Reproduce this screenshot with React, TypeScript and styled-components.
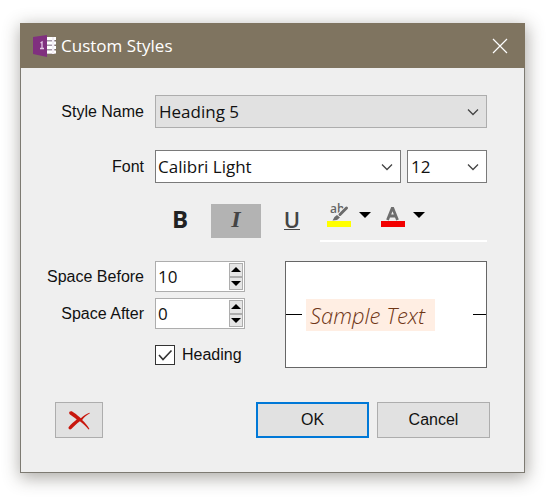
import React, { useState } from "react";
import styled, { createGlobalStyle, css } from "styled-components";

const uiFont = `"Liberation Sans", Arial, sans-serif`;
const fieldFont = `"Open Sans", "Noto Sans", sans-serif`;

const GlobalStyle = createGlobalStyle`
  *, *::before, *::after { box-sizing: border-box; }
  body { margin: 0; background: #fff; color: #111; font: 16px/20px ${uiFont}; }
  button, input, select { margin: 0; font: inherit; color: inherit; border-radius: 0; }
`;

const Page = styled.main`
  padding: 23px 35px 27px 20px;
`;

const Dialog = styled.section`
  border: 1px solid #7d7a72;
  border-top: 0;
  background: #efefef;
  box-shadow: 1px 4px 16px 1px rgba(60, 55, 45, 0.42);
`;

const TitleBar = styled.header`
  display: flex;
  align-items: center;
  height: 45px;
  margin: 0 -1px;
  padding: 0 17px 0 13px;
  background: #7f7460;
  color: #fff;
`;

const Title = styled.h1`
  flex: 1;
  margin: 0 0 0 5px;
  font: 400 17px/24px ${fieldFont};
`;

const CloseButton = styled.button`
  display: flex;
  padding: 0;
  border: 0;
  background: none;
`;

const Form = styled.form`
  padding: 27px 37px 34px 24px;
`;

const Row = styled.div<{ $gap: number }>`
  display: grid;
  grid-template-columns: 99px minmax(0, 1fr);
  column-gap: 11px;
  align-items: center;
  margin-bottom: ${(p) => p.$gap}px;
`;

const Label = styled.label`
  text-align: right;
  white-space: nowrap;
`;

const FontFields = styled.div`
  display: grid;
  grid-template-columns: minmax(0, 1fr) 80px;
  gap: 6px;
`;

const SelectBox = styled.div<{ $filled?: boolean }>`
  display: grid;
  align-items: center;
  height: 33px;
  border: 1px solid ${(p) => (p.$filled ? "#adadad" : "#7a7a7a")};
  background: ${(p) => (p.$filled ? "#e1e1e1" : "#fff")};

  select, svg { grid-area: 1 / 1; }
  svg { justify-self: end; margin-right: 7px; pointer-events: none; }
`;

const Select = styled.select<{ $indent: number }>`
  width: 100%;
  height: 31px;
  padding: 0 24px 0 ${(p) => p.$indent}px;
  appearance: none;
  border: 0;
  background: none;
  font: 17px/24px ${fieldFont};
`;

const Toolbar = styled.div`
  display: flex;
  gap: 6px;
  margin: 0 0 19px 110px;
`;

const StyleButton = styled.button<{ $on: boolean }>`
  display: flex;
  align-items: center;
  justify-content: center;
  width: 50px;
  height: 34px;
  margin-top: 4px;
  padding: 0 0 4px;
  border: 0;
  background: ${(p) => (p.$on ? "#b3b3b3" : "transparent")};
  color: #222;
`;

const glyph = css`
  font-size: 24px;
  line-height: 24px;
`;

const Bold = styled.b`
  ${glyph}
  font-family: ${fieldFont};
`;

const Italic = styled.i`
  ${glyph}
  font-family: "Liberation Serif", serif;
  font-weight: 700;
  color: #444;
`;

const Underline = styled.span`
  font: 600 22px/20px ${fieldFont};
  border-bottom: 1px solid #444;
  color: #444;
`;

const ColorStrip = styled.div`
  display: flex;
  flex: 1;
  gap: 4px;
  height: 42px;
  margin-left: -3px;
  padding: 3px 0 0 7px;
  border-bottom: 2px solid #fff;
`;

const ColorButton = styled.button`
  display: flex;
  align-items: center;
  gap: 8px;
  width: 50px;
  height: 24px;
  padding: 0;
  border: 0;
  background: none;
  svg { flex: none; }
`;

const Lower = styled.div`
  display: flex;
  gap: 40px;
`;

const Spacing = styled.div`
  display: grid;
  grid-template-columns: 99px 90px;
  column-gap: 11px;
  row-gap: 6px;
  align-items: center;
  align-content: start;
`;

const Spinner = styled.div`
  display: flex;
  height: 31px;
  padding: 1px;
  border: 1px solid #adadad;
  background: #fff;
`;

const NumberInput = styled.input`
  flex: 1;
  min-width: 0;
  padding: 0 1px;
  appearance: textfield;
  border: 0;
  outline: 0;
  background: none;
  font: 17px/24px ${fieldFont};
  &::-webkit-inner-spin-button { appearance: none; margin: 0; }
`;

const Arrows = styled.div`
  display: grid;
  grid-template-rows: 1fr 1fr;
  width: 14px;
`;

const Arrow = styled.button`
  display: flex;
  align-items: center;
  justify-content: center;
  min-height: 0;
  padding: 0;
  border: 1px solid #adadad;
  background: #e6e6e6;
`;

const CheckLabel = styled.label`
  grid-column: 2;
  display: flex;
  align-items: center;
  gap: 7px;
  margin-top: 10px;
`;

const CheckBox = styled.span`
  display: grid;
  flex: none;
  width: 20px;
  height: 20px;
  input, svg { grid-area: 1 / 1; }
  svg { pointer-events: none; visibility: hidden; }
  input:checked + svg { visibility: visible; }
  input {
    width: 20px;
    height: 20px;
    appearance: none;
    border: 1px solid #333;
    background: #fff;
  }
`;

const Preview = styled.div`
  display: flex;
  flex: 1;
  align-items: center;
  height: 107px;
  border: 1px solid #666;
  background: #fff;
`;

const Rule = styled.span<{ $end?: boolean }>`
  width: ${(p) => (p.$end ? 13 : 16)}px;
  height: 1px;
  margin-left: ${(p) => (p.$end ? "auto" : 0)};
  background: #000;
`;

const Sample = styled.span`
  margin-left: 4px;
  padding: 0 10px 0 4px;
  background: #ffeee3;
  color: #6f3616;
  font: italic 300 22px/32px ${fieldFont};
  white-space: nowrap;
`;

const Footer = styled.footer`
  display: flex;
  gap: 8px;
  margin: 34px -3px 0 10px;
`;

const Button = styled.button<{ $primary?: boolean; $icon?: boolean }>`
  display: flex;
  align-items: center;
  justify-content: center;
  width: ${(p) => (p.$icon ? 48 : 113)}px;
  height: 36px;
  padding: 0;
  margin-right: ${(p) => (p.$icon ? "auto" : 0)};
  border: ${(p) => (p.$primary ? "2px solid #0078d7" : "1px solid #adadad")};
  background: #e1e1e1;
`;

const NotebookIcon = () => (
  <svg width="23" height="24" viewBox="0 0 23 24" aria-hidden="true">
    <path d="M13 3h9v17h-9z" fill="#a698a8" />
    <path d="M13 4.500h10M13 9h10M13 13.500h10M13 18h10" stroke="#fff" strokeWidth="3" />
    <path d="M20 3v17" stroke="#f4eef5" strokeWidth="2" />
    <path d="M0 3 14 1v22L0 20z" fill="#80307f" />
    <path d="M7.500 9 9 8V14.500M7 14.500h4" fill="none" stroke="#e3c6e6" strokeWidth="1.300" />
  </svg>
);

const Chevron = () => (
  <svg width="12" height="8" viewBox="0 0 12 8" aria-hidden="true">
    <path d="M1 1.500 6 6.500 11 1.500" fill="none" stroke="#444" strokeWidth="1.300" />
  </svg>
);

const DropArrow = () => (
  <svg width="12" height="6" viewBox="0 0 12 6" aria-hidden="true">
    <path d="M0 0h12L6 6z" fill="#000" />
  </svg>
);

const ArrowGlyph = ({ up }: { up?: boolean }) => (
  <svg width="10" height="5" viewBox="0 0 10 5" aria-hidden="true">
    <path d={up ? "M0 5h10L5 0z" : "M0 0h10L5 5z"} fill="#000" />
  </svg>
);

const HighlightIcon = () => (
  <svg width="24" height="24" viewBox="0 0 24 24" overflow="visible" aria-hidden="true">
    <text x="3" y="10" fontFamily="Open Sans, sans-serif" fontWeight="600" fontSize="12" fill="#666">ab</text>
    <path d="M19.500 5 13 11.500" stroke="#efefef" strokeWidth="5" />
    <path d="M19.500 5 13 11.500" stroke="#6b6b6b" strokeWidth="3" strokeLinecap="round" />
    <path d="m10 12 3 2.500-3 2.500-4.500.500 2-3.500z" fill="#6b6b6b" />
    <path d="M0 18h24v6H0z" fill="#ff0" />
  </svg>
);

const FontColorIcon = () => (
  <svg width="24" height="24" viewBox="0 0 24 24" aria-hidden="true">
    <path d="M6.500 17 11.500 4.500 16.500 17M8 13h7" fill="none" stroke="#6e6e6e" strokeWidth="2.800" strokeLinejoin="bevel" />
    <path d="M0 18h24v6H0z" fill="#f20000" />
  </svg>
);

const DeleteIcon = () => (
  <svg width="22" height="20" viewBox="0 0 24 22" aria-hidden="true">
    <path d="M1.500 2C3 .500 5 1.500 6.500 3c3 2 5 4 7.500 6 3-2.500 6-5 9.500-6l.500.500C20.500 5.500 17.500 8 15.500 11c3 3 6 6 8 10l-1 .500C20 18 16 15 13 12.500 9.500 15 6.500 18 3.500 21c-1.500 1-3.500 0-3-2 2.500-3.500 6-6 9-8.500C7 8 4 6.500 2 5 1 4 1 3 1.500 2z" fill="#c8170d" />
  </svg>
);

type SpinProps = { id: string; label: string; value: number; onChange: (n: number) => void };

const SpinField = ({ id, label, value, onChange }: SpinProps) => (
  <>
    <Label htmlFor={id}>{label}</Label>
    <Spinner>
      <NumberInput id={id} type="number" value={value} onChange={(e) => onChange(Number(e.target.value))} />
      <Arrows>
        <Arrow type="button" aria-label={`Increase ${label}`} onClick={() => onChange(value + 1)}>
          <ArrowGlyph up />
        </Arrow>
        <Arrow type="button" aria-label={`Decrease ${label}`} onClick={() => onChange(value - 1)}>
          <ArrowGlyph />
        </Arrow>
      </Arrows>
    </Spinner>
  </>
);

export default function App() {
  const [bold, setBold] = useState(false);
  const [italic, setItalic] = useState(true);
  const [underline, setUnderline] = useState(false);
  const [before, setBefore] = useState(10);
  const [after, setAfter] = useState(0);

  return (
    <Page>
      <GlobalStyle />
      <Dialog role="dialog" aria-labelledby="title">
        <TitleBar>
          <NotebookIcon />
          <Title id="title">Custom Styles</Title>
          <CloseButton type="button" aria-label="Close">
            <svg width="16" height="16" viewBox="0 0 16 16" aria-hidden="true">
              <path d="m1 1 14 14M15 1 1 15" stroke="#fff" strokeWidth="1.200" />
            </svg>
          </CloseButton>
        </TitleBar>
        <Form onSubmit={(e) => e.preventDefault()}>
          <Row $gap={22}>
            <Label htmlFor="style">Style Name</Label>
            <SelectBox $filled>
              <Select id="style" $indent={3}>
                <option>Heading 5</option>
              </Select>
              <Chevron />
            </SelectBox>
          </Row>
          <Row $gap={17}>
            <Label htmlFor="font">Font</Label>
            <FontFields>
              <SelectBox>
                <Select id="font" $indent={2}>
                  <option>Calibri Light</option>
                </Select>
                <Chevron />
              </SelectBox>
              <SelectBox>
                <Select aria-label="Font size" $indent={3}>
                  <option>12</option>
                </Select>
                <Chevron />
              </SelectBox>
            </FontFields>
          </Row>
          <Toolbar>
            <StyleButton type="button" $on={bold} aria-pressed={bold} onClick={() => setBold(!bold)}>
              <Bold>B</Bold>
            </StyleButton>
            <StyleButton type="button" $on={italic} aria-pressed={italic} onClick={() => setItalic(!italic)}>
              <Italic>I</Italic>
            </StyleButton>
            <StyleButton type="button" $on={underline} aria-pressed={underline} onClick={() => setUnderline(!underline)}>
              <Underline>U</Underline>
            </StyleButton>
            <ColorStrip>
              <ColorButton type="button" aria-label="Highlight color">
                <HighlightIcon />
                <DropArrow />
              </ColorButton>
              <ColorButton type="button" aria-label="Font color">
                <FontColorIcon />
                <DropArrow />
              </ColorButton>
            </ColorStrip>
          </Toolbar>
          <Lower>
            <Spacing>
              <SpinField id="before" label="Space Before" value={before} onChange={setBefore} />
              <SpinField id="after" label="Space After" value={after} onChange={setAfter} />
              <CheckLabel>
                <CheckBox>
                  <input type="checkbox" defaultChecked />
                  <svg width="20" height="20" viewBox="0 0 20 20" aria-hidden="true">
                    <path d="m4 10 4 4.500L16.500 5.500" fill="none" stroke="#333" strokeWidth="1.600" />
                  </svg>
                </CheckBox>
                Heading
              </CheckLabel>
            </Spacing>
            <Preview>
              <Rule />
              <Sample>Sample Text</Sample>
              <Rule $end />
            </Preview>
          </Lower>
          <Footer>
            <Button type="button" $icon aria-label="Delete style">
              <DeleteIcon />
            </Button>
            <Button type="submit" $primary>OK</Button>
            <Button type="button">Cancel</Button>
          </Footer>
        </Form>
      </Dialog>
    </Page>
  );
}
